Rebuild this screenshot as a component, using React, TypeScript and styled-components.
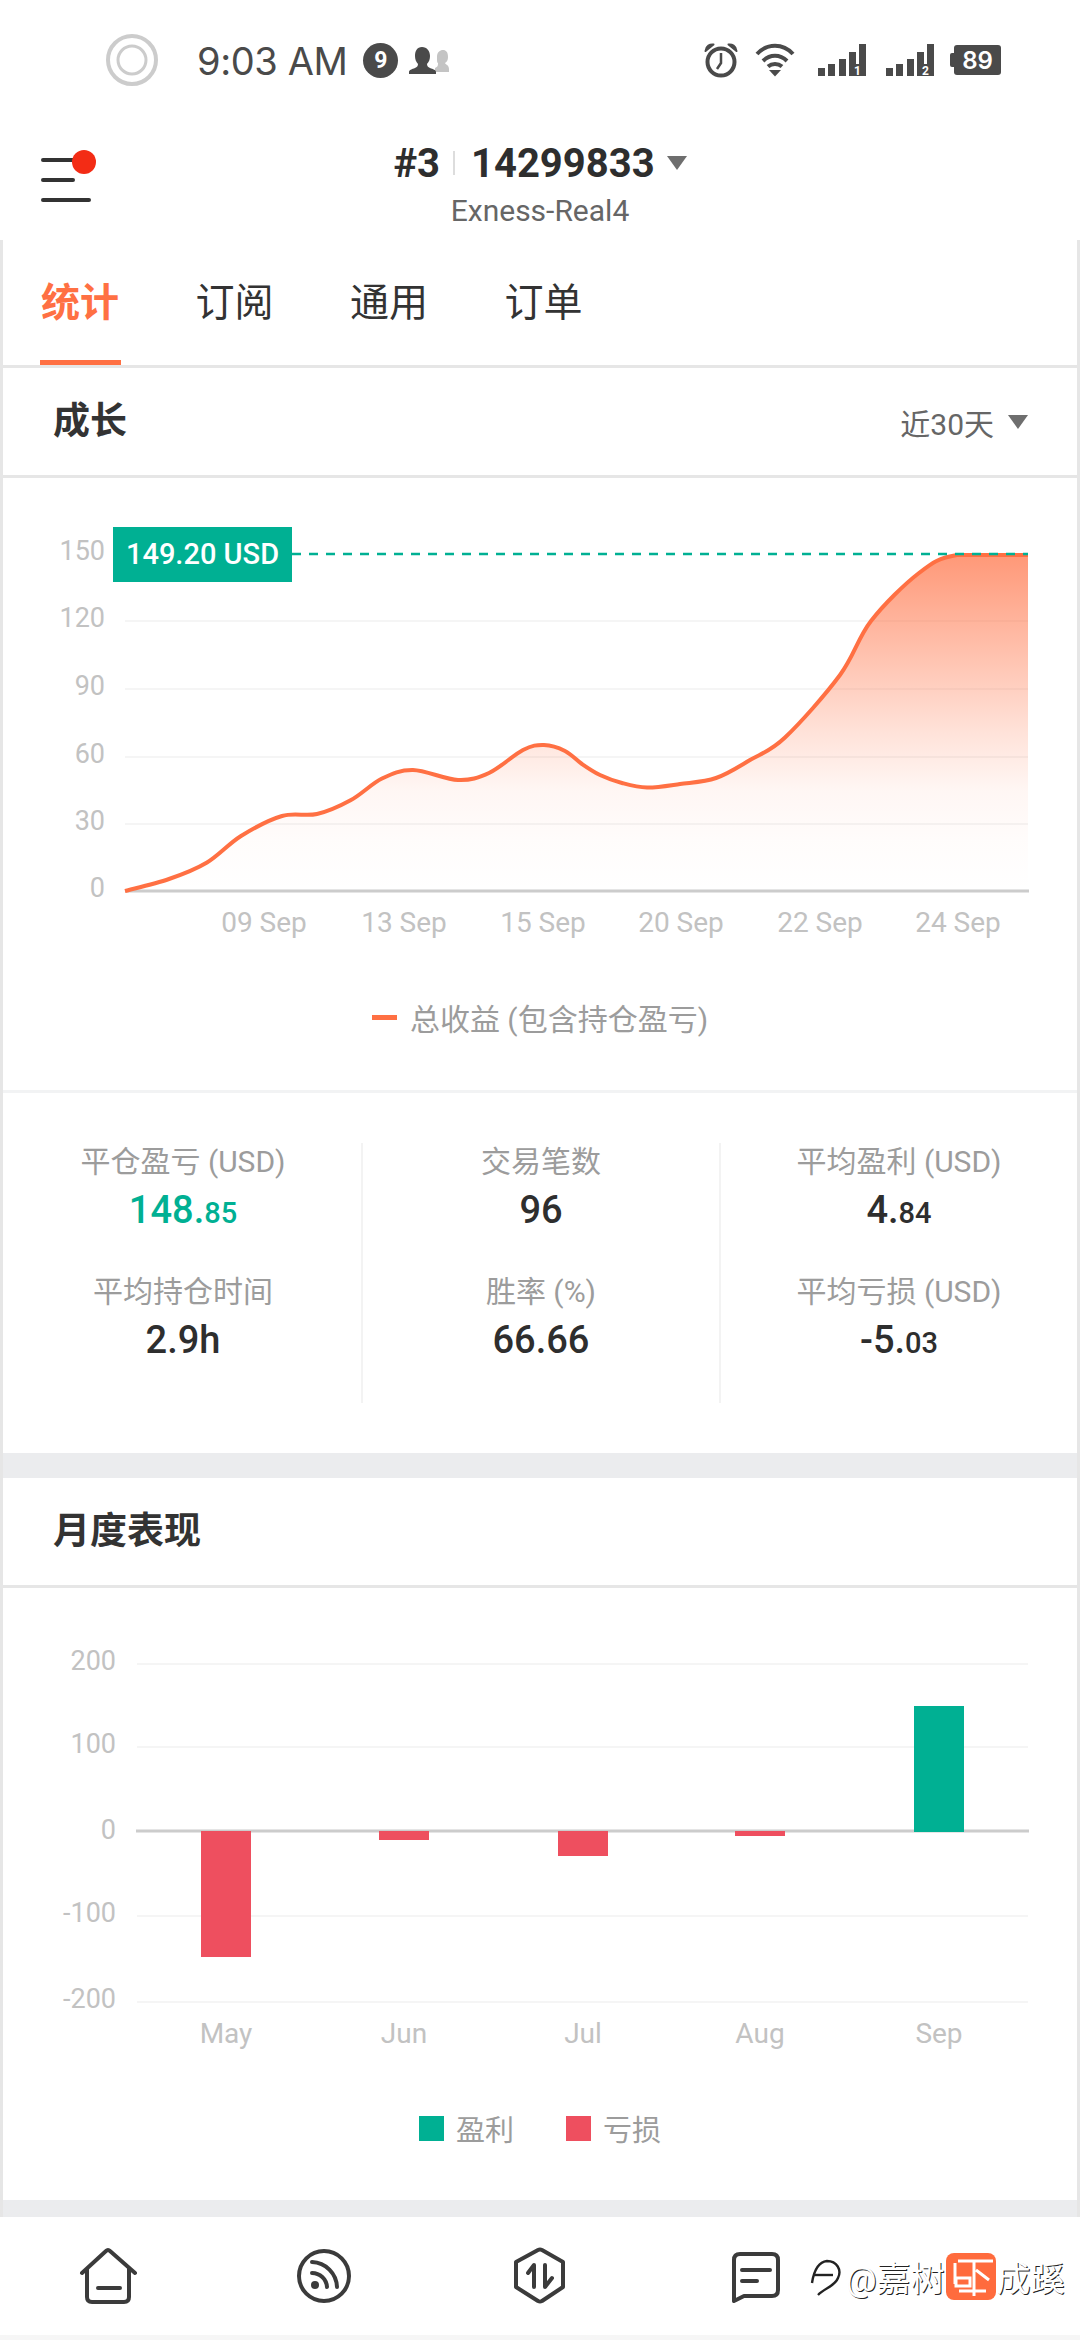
import React from 'react';
import styled, { createGlobalStyle } from 'styled-components';

const FONT = `Roboto, "Noto Sans CJK SC", "Noto Sans", sans-serif`;
const ORANGE = '#ff7043';
const GREEN = '#00b093';
const RED = '#ee4f5f';

const GlobalStyle = createGlobalStyle`
	html, body {
		margin: 0;
		padding: 0;
		background: #fff;
	}
	body {
		font-family: ${FONT};
	}
`;

const Page = styled.div`
	width: 1080px;
	height: 2340px;
	position: relative;
	overflow: hidden;
	background: #fff;
`;

const StatusBar = styled.div`
	height: 120px;
	display: flex;
	align-items: center;
	padding: 0 79px 0 106px;
	box-sizing: border-box;
	color: #4a4a4a;
`;

const StatusTime = styled.span`
	margin-left: 39px;
	padding-top: 2px;
	font-family: Inter, Roboto, sans-serif;
	font-size: 38px;
	letter-spacing: -0.4px;
	color: #4a4a4a;
`;

const NotifyBadge = styled.span`
	width: 35px;
	height: 35px;
	margin-left: 16px;
	border-radius: 50%;
	background: #4a4a4a;
	color: #fff;
	font-size: 23px;
	font-weight: 700;
	display: flex;
	align-items: center;
	justify-content: center;
`;

const PersonIcon = styled.svg`
	width: 40px;
	height: 28px;
	margin-left: 11px;
`;

const StatusRight = styled.div`
	margin-left: auto;
	display: flex;
	align-items: center;
	gap: 20px;
`;

const AlarmIcon = styled.svg`
	width: 34px;
	height: 36px;
	fill: none;
	stroke: #4a4a4a;
`;

const WifiIcon = styled.svg`
	width: 40px;
	height: 34px;
	margin: 0 3px 0 -3px;
	fill: none;
	stroke: #4a4a4a;
	stroke-width: 4;
`;

const Battery = styled.div`
	position: relative;
	width: 47px;
	height: 30px;
	margin-left: 0;
	border-radius: 3px;
	background: #4a4a4a;
	color: #fff;
	font-family: Inter, Roboto, sans-serif;
	font-size: 24px;
	font-weight: 600;
	display: flex;
	align-items: center;
	justify-content: center;
	&::before {
		content: '';
		position: absolute;
		left: -4px;
		top: 8px;
		width: 4px;
		height: 14px;
		border-radius: 2px 0 0 2px;
		background: #4a4a4a;
	}
`;

const TopBar = styled.div`
	height: 120px;
	display: grid;
	grid-template-columns: 1fr auto 1fr;
	align-items: start;
`;

const Menu = styled.div`
	position: relative;
	width: 50px;
	margin: 38px 0 0 41px;
	height: 44px;
	display: flex;
	flex-direction: column;
	justify-content: space-between;
`;

const MenuLine = styled.i<{ $w: number }>`
	display: block;
	width: ${p => p.$w}px;
	height: 4px;
	border-radius: 2px;
	background: #333;
`;

const MenuDot = styled.i`
	position: absolute;
	left: 31px;
	top: -8px;
	width: 24px;
	height: 24px;
	border-radius: 50%;
	background: #f32c15;
`;

const TitleBlock = styled.div`
	display: flex;
	flex-direction: column;
	align-items: center;
	padding-top: 18px;
`;

const TitleRow = styled.div`
	display: flex;
	align-items: center;
	height: 50px;
	color: #2e2e2e;
	font-size: 40px;
	font-weight: 700;
`;

const TitleSep = styled.i`
	width: 2px;
	height: 24px;
	margin: 0 16px 0 13px;
	background: #ddd;
`;

const Caret = styled.i<{ $w: number; $gap: number }>`
	display: block;
	width: 0;
	height: 0;
	margin-left: ${p => p.$gap}px;
	border-left: ${p => p.$w / 2}px solid transparent;
	border-right: ${p => p.$w / 2}px solid transparent;
	border-top: ${p => Math.round(p.$w * 0.68)}px solid #6e6e6e;
`;

const Server = styled.div`
	margin-top: 5px;
	font-size: 30px;
	line-height: 36px;
	color: #666;
`;

const Body = styled.div`
	border-left: 3px solid #e6e6e6;
	border-right: 3px solid #e6e6e6;
`;

const Tabs = styled.div`
	height: 125px;
	display: flex;
	gap: 78.5px;
	padding-left: 38px;
	border-bottom: 3px solid #e6e6e6;
`;

const Tab = styled.div<{ $active?: boolean }>`
	position: relative;
	padding-top: 38px;
	width: 76px;
	font-size: 39px;
	line-height: 50px;
	white-space: nowrap;
	font-weight: ${p => (p.$active ? 700 : 400)};
	color: ${p => (p.$active ? ORANGE : '#333')};
	&::after {
		content: '';
		display: ${p => (p.$active ? 'block' : 'none')};
		position: absolute;
		left: -1px;
		right: -4px;
		bottom: 0;
		height: 5px;
		background: ${ORANGE};
	}
`;

const SectionHead = styled.div`
	height: 107px;
	display: flex;
	align-items: center;
	justify-content: space-between;
	padding: 0 49px 0 50px;
	border-bottom: 3px solid #e6e6e6;
`;

const SectionTitle = styled.div`
	margin-top: -8px;
	font-size: 37px;
	font-weight: 700;
	color: #333;
`;

const RangePicker = styled.div`
	display: flex;
	align-items: center;
	font-size: 30px;
	color: #666;
`;

const ChartSvg = styled.svg`
	display: block;
	font-family: ${FONT};
`;

const AxisText = styled.text`
	font-size: 27px;
	fill: #c2c2c2;
`;

const DateText = styled(AxisText)`
	font-size: 28px;
`;

const TagText = styled.text`
	font-size: 29px;
	font-weight: 500;
	fill: #fff;
`;

const GrowthPanel = styled.div`
	height: 612px;
	border-bottom: 3px solid #f2f3f4;
`;

const Legend = styled.div`
	height: 94px;
	display: flex;
	align-items: center;
	justify-content: center;
	gap: 13px;
	font-size: 30px;
	color: #9c9c9c;
`;

const LegendDash = styled.i`
	width: 25px;
	height: 5px;
	background: ${ORANGE};
`;

const Stats = styled.div`
	height: 360px;
	box-sizing: border-box;
	padding-top: 50px;
	display: grid;
	grid-template-columns: repeat(3, 1fr);
	align-items: start;
`;

const StatColumn = styled.div<{ $line?: boolean }>`
	height: 260px;
	border-left: 2px solid ${p => (p.$line ? '#f3f3f3' : 'transparent')};
`;

const Stat = styled.div`
	height: 130px;
	text-align: center;
`;

const StatLabel = styled.div`
	height: 38px;
	line-height: 38px;
	font-size: 30px;
	color: #9c9c9c;
`;

const StatValue = styled.div<{ $green?: boolean }>`
	height: 58px;
	line-height: 58px;
	font-size: 38px;
	font-weight: 500;
	color: ${p => (p.$green ? GREEN : '#2e2e2e')};
	small {
		font-size: 29px;
	}
`;

const Band = styled.div<{ $h: number }>`
	height: ${p => p.$h}px;
	background: #ebecee;
`;

const MonthlyPanel = styled.div`
	height: 612px;
`;

const MonthlyLegend = styled.div`
	height: 88px;
	display: flex;
	align-items: center;
	justify-content: center;
	padding-right: 0;
	font-size: 29px;
	color: #9c9c9c;
`;

const LegendSwatch = styled.i<{ $color: string }>`
	width: 25px;
	height: 25px;
	margin-right: 12px;
	background: ${p => p.$color};
`;

const LegendName = styled.span`
	margin-right: 52px;
	&:last-child {
		margin-right: 0;
	}
`;

const BottomNav = styled.div`
	height: 118px;
	display: grid;
	grid-template-columns: repeat(5, 216px);
	align-items: center;
	justify-items: center;
`;

const NavIcon = styled.svg`
	width: 60px;
	height: 60px;
	fill: none;
	stroke: #3b3b3b;
	stroke-width: 4;
	stroke-linecap: round;
	stroke-linejoin: round;
`;

const BottomEdge = styled.div`
	height: 5px;
	background: #f6f6f6;
`;

const Watermark = styled.div`
	position: absolute;
	left: 809px;
	top: 2253px;
	height: 47px;
	display: flex;
	align-items: center;
	color: #fff;
	font-size: 34px;
	text-shadow: 1px 1px 0 #222;
	white-space: nowrap;
`;

const WatermarkLogo = styled.svg`
	width: 34px;
	height: 44px;
	margin: 6px 3px 0 0;
	overflow: visible;
	fill: none;
	stroke: #222;
	stroke-width: 2.4;
`;

const WatermarkBadge = styled.svg`
	width: 50px;
	height: 47px;
	margin: 0 1px;
	border-radius: 8px;
	background: #ff6b3d;
	fill: none;
	stroke: #fff;
	stroke-width: 3;
`;

// traced from the curve, page coordinates
const growth: [number, number][] = [
	[125, 891], [169, 879], [207, 862.5], [241, 836], [282, 816], [317, 814], [351, 800],
	[382, 778.5], [413, 770], [458, 780], [489, 773], [523, 750], [544, 745], [565, 751],
	[582, 764], [600, 775], [622, 783], [647, 787.5], [680, 784], [716, 778], [750, 760], [785, 737.5], [840, 675], [871, 621], [919, 573],
	[957, 555], [1028, 555],
];

const smooth = (pts: [number, number][]) => {
	let d = `M${pts[0][0]} ${pts[0][1]}`;
	for (let i = 0; i < pts.length - 1; i++) {
		const a = pts[Math.max(i - 1, 0)];
		const b = pts[i];
		const c = pts[i + 1];
		const e = pts[Math.min(i + 2, pts.length - 1)];
		const c1x = b[0] + (c[0] - a[0]) / 6;
		const c1y = b[1] + (c[1] - a[1]) / 6;
		const c2x = c[0] - (e[0] - b[0]) / 6;
		const c2y = Math.max(c[1] - (e[1] - b[1]) / 6, 555);
		d += ` C${c1x.toFixed(1)} ${Math.max(c1y, 555).toFixed(1)} ${c2x.toFixed(1)} ${c2y.toFixed(1)} ${c[0]} ${c[1]}`;
	}
	return d;
};

const growthTicks: [string, number][] = [['150', 554], ['120', 621], ['90', 689], ['60', 757], ['30', 824], ['0', 891]];
const growthDates: [string, number][] = [['09 Sep', 264], ['13 Sep', 404], ['15 Sep', 543], ['20 Sep', 681], ['22 Sep', 820], ['24 Sep', 958]];

const monthlyTicks: [string, number][] = [['200', 1664], ['100', 1747], ['-100', 1916], ['-200', 2002]];
const monthlyBars = [
	{ name: 'May', x: 201, top: 1831, bottom: 1957, color: RED },
	{ name: 'Jun', x: 379, top: 1831, bottom: 1840, color: RED },
	{ name: 'Jul', x: 558, top: 1831, bottom: 1856, color: RED },
	{ name: 'Aug', x: 735, top: 1831, bottom: 1836, color: RED },
	{ name: 'Sep', x: 914, top: 1706, bottom: 1832, color: GREEN },
];

const GrowthChart = () => {
	const line = smooth(growth);
	return (
		<ChartSvg width={1074} height={492} viewBox="3 478 1074 492">
			<defs>
				<linearGradient id="growthFill" x1="0" y1="555" x2="0" y2="891" gradientUnits="userSpaceOnUse">
					<stop offset="0" stopColor={ORANGE} stopOpacity="0.72" />
					<stop offset="0.53" stopColor={ORANGE} stopOpacity="0.2" />
					<stop offset="0.7" stopColor={ORANGE} stopOpacity="0.06" />
					<stop offset="0.85" stopColor={ORANGE} stopOpacity="0.02" />
					<stop offset="1" stopColor={ORANGE} stopOpacity="0" />
				</linearGradient>
			</defs>
			{growthTicks.slice(1, 5).map(([, y]) => (
				<line key={y} x1="125" x2="1028" y1={y} y2={y} stroke="#f5f5f5" strokeWidth="2" />
			))}
			<path d={`${line} L1028 891 L125 891 Z`} fill="url(#growthFill)" />
			<line x1="125" x2="1029" y1="891" y2="891" stroke="#cccccc" strokeWidth="3" />
			<path d={line} fill="none" stroke={ORANGE} strokeWidth="4" />
			<line x1="292" x2="1028" y1="554" y2="554" stroke={GREEN} strokeWidth="2.5" strokeDasharray="9 8" />
			{growthTicks.map(([t, y]) => (
				<AxisText key={t} x="105" y={y + 6} textAnchor="end">{t}</AxisText>
			))}
			{growthDates.map(([t, x]) => (
				<DateText key={t} x={x} y="932" textAnchor="middle">{t}</DateText>
			))}
			<rect x="113" y="527" width="179" height="55" fill={GREEN} />
			<TagText x="202.5" y="564" textAnchor="middle">149.20 USD</TagText>
		</ChartSvg>
	);
};

const MonthlyChart = () => (
	<ChartSvg width={1074} height={496} viewBox="3 1588 1074 496">
		{monthlyTicks.map(([, y]) => (
			<line key={y} x1="137" x2="1028" y1={y} y2={y} stroke="#f5f5f5" strokeWidth="2" />
		))}
		<line x1="136" x2="1029" y1="1831" y2="1831" stroke="#cccccc" strokeWidth="3" />
		{monthlyBars.map(b => (
			<rect key={b.name} x={b.x} y={b.top} width="50" height={b.bottom - b.top} fill={b.color} />
		))}
		{[...monthlyTicks, ['0', 1833] as [string, number]].map(([t, y]) => (
			<AxisText key={t} x="116" y={y + 6} textAnchor="end">{t}</AxisText>
		))}
		{monthlyBars.map(b => (
			<DateText key={b.name} x={b.x + 25} y="2043" textAnchor="middle">{b.name}</DateText>
		))}
	</ChartSvg>
);

const Money = ({ int, dec }: { int: string; dec: string }) => (
	<>{int}.<small>{dec}</small></>
);

const Signal = ({ sim }: { sim: string }) => (
	<svg width="48" height="32" viewBox="0 0 48 32" fill="#4a4a4a">
		<rect x="0" y="24" width="7" height="8" />
		<rect x="10" y="20" width="7" height="12" />
		<rect x="21" y="15" width="7" height="17" />
		<rect x="31" y="8" width="7" height="24" />
		<rect x="41" y="0" width="7" height="32" />
		<rect x="31" y="20" width="17" height="12" />
		<text x="39.5" y="30.5" fontSize="12" fontWeight="700" fontFamily="Roboto, sans-serif" fill="#fff" textAnchor="middle">{sim}</text>
	</svg>
);

export default function App() {
	return (
		<Page>
			<GlobalStyle />
			<StatusBar>
				<svg width="52" height="52" viewBox="0 0 52 52" fill="none" stroke="#cccccc">
					<circle cx="26" cy="26" r="24" strokeWidth="4" />
					<circle cx="26" cy="26" r="14" strokeWidth="3" />
				</svg>
				<StatusTime>9:03 AM</StatusTime>
				<NotifyBadge>9</NotifyBadge>
				<PersonIcon viewBox="0 0 40 28">
					<path d="M28 11c0-5 3-7 6-7s5 2 5 7c0 3-1 5-3 6 1 2 4 2 4 6v3H26v-4c3-1 3-3 3-5-1 0-1-3-1-6z" fill="#c4c4c4" />
					<path d="M13 1c-5 0-7 4-7 9 0 3 1 6 3 8 0 2-1 3-3 4-3 1-6 2-6 4v2h27v-2c0-2-3-3-6-4-2-1-3-2-3-4 2-2 3-5 3-8 0-5-3-9-8-9z" fill="#4a4a4a" />
				</PersonIcon>
				<StatusRight>
					<AlarmIcon viewBox="0 0 34 36">
						<circle cx="17" cy="20" r="13.5" strokeWidth="4" />
						<path d="M17 11v10l-4 6" strokeWidth="2.5" />
						<path d="M1.5 9C2 4 6 2 9.5 2.5zM32.5 9C32 4 28 2 24.500 2.500z" fill="#4a4a4a" strokeWidth="2" strokeLinejoin="round" />
					</AlarmIcon>
					<WifiIcon viewBox="0 0 40 34">
						<path d="M2 11C12 0 28 0 38 11" />
						<path d="M8 18C15 11 25 11 32 18" />
						<path d="M13 23.500C17 20 23 20 27 23.500" />
						<path d="M14 27h12l-6 6.500z" fill="#4a4a4a" stroke="none" />
					</WifiIcon>
					<Signal sim="1" />
					<Signal sim="2" />
					<Battery>89</Battery>
				</StatusRight>
			</StatusBar>

			<TopBar>
				<Menu>
					<MenuLine $w={50} />
					<MenuLine $w={34} />
					<MenuLine $w={50} />
					<MenuDot />
				</Menu>
				<TitleBlock>
					<TitleRow>
						#3<TitleSep />14299833<Caret $w={20} $gap={12} />
					</TitleRow>
					<Server>Exness-Real4</Server>
				</TitleBlock>
			</TopBar>

			<Body>
				<Tabs>
					<Tab $active>统计</Tab>
					<Tab>订阅</Tab>
					<Tab>通用</Tab>
					<Tab>订单</Tab>
				</Tabs>
				<SectionHead>
					<SectionTitle>成长</SectionTitle>
					<RangePicker>
						近30天<Caret $w={20} $gap={14} />
					</RangePicker>
				</SectionHead>
				<GrowthPanel>
					<GrowthChart />
					<Legend>
						<LegendDash />
						<span>总收益 (包含持仓盈亏)</span>
					</Legend>
				</GrowthPanel>
				<Stats>
					<StatColumn>
						<Stat>
							<StatLabel>平仓盈亏 (USD)</StatLabel>
							<StatValue $green><Money int="148" dec="85" /></StatValue>
						</Stat>
						<Stat>
							<StatLabel>平均持仓时间</StatLabel>
							<StatValue>2.9h</StatValue>
						</Stat>
					</StatColumn>
					<StatColumn $line>
						<Stat>
							<StatLabel>交易笔数</StatLabel>
							<StatValue>96</StatValue>
						</Stat>
						<Stat>
							<StatLabel>胜率 (%)</StatLabel>
							<StatValue>66.66</StatValue>
						</Stat>
					</StatColumn>
					<StatColumn $line>
						<Stat>
							<StatLabel>平均盈利 (USD)</StatLabel>
							<StatValue><Money int="4" dec="84" /></StatValue>
						</Stat>
						<Stat>
							<StatLabel>平均亏损 (USD)</StatLabel>
							<StatValue><Money int="-5" dec="03" /></StatValue>
						</Stat>
					</StatColumn>
				</Stats>
				<Band $h={25} />
				<SectionHead>
					<SectionTitle>月度表现</SectionTitle>
				</SectionHead>
				<MonthlyPanel>
					<MonthlyChart />
					<MonthlyLegend>
						<LegendSwatch $color={GREEN} />
						<LegendName>盈利</LegendName>
						<LegendSwatch $color={RED} />
						<LegendName>亏损</LegendName>
					</MonthlyLegend>
				</MonthlyPanel>
				<Band $h={17} />
			</Body>

			<BottomNav>
				<NavIcon viewBox="0 0 60 60">
					<path d="M4 27L28 5Q30 3 32 5L57 27M9 23V51Q9 56 14 56H46Q51 56 51 51V23M20 42H42" />
				</NavIcon>
				<NavIcon viewBox="0 0 60 60">
					<circle cx="30" cy="30" r="25" />
					<circle cx="21" cy="39" r="4" fill="#3b3b3b" stroke="none" />
					<path d="M18 16A26 26 0 0 1 43 41M18 27A15 15 0 0 1 33 41" />
				</NavIcon>
				<NavIcon viewBox="0 0 60 60">
					<path d="M28 4Q30 3 32 4L53 16V41L32 55Q30 56 28 55L6 41V16ZM24 41V19L18 27M35 19V41L42 32" />
				</NavIcon>
				<NavIcon viewBox="0 0 60 60">
					<path d="M8 55V14Q8 8 14 8H46Q52 8 52 14V44Q52 50 46 50H18ZM16 24H44M16 35H31" />
				</NavIcon>
			</BottomNav>
			<BottomEdge />

			<Watermark>
				<WatermarkLogo viewBox="0 0 34 44">
					<path d="M3 25C5 12 9 4 18 3C28 3 33 12 29 20C26 28 16 30 9 37" />
					<path d="M4 17H24" />
				</WatermarkLogo>
				<span>@嘉树</span>
				<WatermarkBadge viewBox="0 0 50 47">
					<path d="M12 8H47M28 8V43M30 17L43 27M9 10V31M10 25H24V33H10ZM13 38H40" />
				</WatermarkBadge>
				<span>成蹊</span>
			</Watermark>
		</Page>
	);
}
